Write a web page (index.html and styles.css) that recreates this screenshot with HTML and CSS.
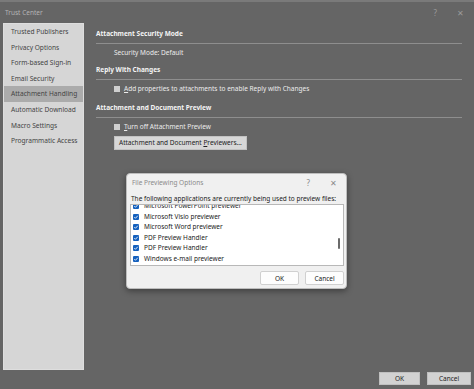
FILE: index.html
```html
<!DOCTYPE html>
<html>
<head>
<meta charset="utf-8">
<link rel="stylesheet" href="styles.css">
</head>
<body>
<div class="window">
  <div class="titlebar">
    <span class="title">Trust Center</span>
    <span class="tb-btns"><span class="q">?</span><span class="x">✕</span></span>
  </div>
  <div class="main">
    <ul class="sidebar">
      <li>Trusted Publishers</li>
      <li>Privacy Options</li>
      <li>Form-based Sign-in</li>
      <li>Email Security</li>
      <li class="active">Attachment Handling</li>
      <li>Automatic Download</li>
      <li>Macro Settings</li>
      <li>Programmatic Access</li>
    </ul>
    <div class="content">
      <div class="head first">Attachment Security Mode</div>
      <div class="row plain">Security Mode: Default</div>
      <div class="head">Reply With Changes</div>
      <div class="row check"><span class="cb"></span><span><u>A</u>dd properties to attachments to enable Reply with Changes</span></div>
      <div class="head">Attachment and Document Preview</div>
      <div class="row check"><span class="cb"></span><span><u>T</u>urn off Attachment Preview</span></div>
      <div class="row"><button class="btn">Attachment and Document <u>P</u>reviewers...</button></div>
    </div>
  </div>
  <div class="footer">
    <button class="fbtn ok">OK</button>
    <button class="fbtn cancel">Cancel</button>
  </div>
</div>

<div class="dialog">
  <div class="d-title">
    <span>File Previewing Options</span>
    <span class="d-tb"><span>?</span><span class="dx">✕</span></span>
  </div>
  <div class="d-label">The following applications are currently being used to preview files:</div>
  <div class="listbox">
    <div class="items">
      <div class="item"><span class="bcb"><svg viewBox="0 0 7 7"><path d="M1.5 3.6 L2.9 5 L5.6 2" fill="none" stroke="#fff" stroke-width="1"/></svg></span>Microsoft PowerPoint previewer</div>
      <div class="item"><span class="bcb"><svg viewBox="0 0 7 7"><path d="M1.5 3.6 L2.9 5 L5.6 2" fill="none" stroke="#fff" stroke-width="1"/></svg></span>Microsoft Visio previewer</div>
      <div class="item"><span class="bcb"><svg viewBox="0 0 7 7"><path d="M1.5 3.6 L2.9 5 L5.6 2" fill="none" stroke="#fff" stroke-width="1"/></svg></span>Microsoft Word previewer</div>
      <div class="item"><span class="bcb"><svg viewBox="0 0 7 7"><path d="M1.5 3.6 L2.9 5 L5.6 2" fill="none" stroke="#fff" stroke-width="1"/></svg></span>PDF Preview Handler</div>
      <div class="item"><span class="bcb"><svg viewBox="0 0 7 7"><path d="M1.5 3.6 L2.9 5 L5.6 2" fill="none" stroke="#fff" stroke-width="1"/></svg></span>PDF Preview Handler</div>
      <div class="item"><span class="bcb"><svg viewBox="0 0 7 7"><path d="M1.5 3.6 L2.9 5 L5.6 2" fill="none" stroke="#fff" stroke-width="1"/></svg></span>Windows e-mail previewer</div>
      <div class="item"><span class="bcb"><svg viewBox="0 0 7 7"><path d="M1.5 3.6 L2.9 5 L5.6 2" fill="none" stroke="#fff" stroke-width="1"/></svg></span>Windows previewer</div>
    </div>
    <div class="scrollbar"><div class="thumb"></div></div>
  </div>
  <div class="d-btns">
    <button class="dbtn">OK</button>
    <button class="dbtn">Cancel</button>
  </div>
</div>
</body>
</html>
```

FILE: styles.css
```css
* { box-sizing: border-box; }
html, body { margin: 0; padding: 0; }
body {
  width: 474px;
  height: 389px;
  overflow: hidden;
  background: #656565;
  font-family: "Noto Sans", "Open Sans", sans-serif;
  font-size: 6.5px;
  color: #f2f2f2;
  position: relative;
}
u { text-decoration: underline; }
.window {
  height: 389px;
  display: flex;
  flex-direction: column;
  border-top: 2px solid #7a7a7a;
}
.titlebar {
  height: 21px;
  display: flex;
  align-items: center;
  justify-content: space-between;
  padding: 0 10px 1px 5px;
  color: #b4b4b4;
}
.tb-btns { display: flex; gap: 20px; color: #9a9a9a; font-size: 8px; }
.main {
  display: flex;
  flex: 1;
}
.sidebar {
  list-style: none;
  margin: 0 0 0 3px;
  padding: 0;
  width: 81px;
  height: 347px;
  background: #d6d6d6;
  border: 1px solid #dedede;
  color: #444;
  font-size: 6.6px;
}
.sidebar li {
  height: 15.6px;
  line-height: 15.6px;
  padding-left: 7px;
  white-space: nowrap;
}
.sidebar li.active { background: #ababab; }
.content {
  flex: 1;
  padding: 5px 12px 0 12px;
}
.head {
  font-weight: bold;
  line-height: 12px;
  padding-bottom: 3px;
  border-bottom: 1px solid #8e8e8e;
  margin-top: 5px;
  color: #f4f4f4;
}
.head.first { margin-top: 0; }
.row {
  line-height: 12px;
  margin-top: 3px;
  padding-left: 18px;
  display: flex;
  align-items: center;
  color: #ececec;
}
.head + .row.check + .head { margin-top: 7px; }
.cb {
  width: 6px;
  height: 6px;
  background: #cfcfcf;
  margin-right: 4px;
  flex: none;
}
.btn {
  font: inherit;
  color: #222;
  background: #d7d7d7;
  border: 1px solid #c2c2c2;
  height: 14px;
  padding: 0 4px;
  line-height: 12px;
}
.footer {
  display: flex;
  justify-content: flex-end;
  gap: 7px;
  padding: 0 3px 4px 0;
}
.fbtn {
  font: inherit;
  color: #222;
  background: #d2d2d2;
  border: 1px solid #c0c0c0;
  height: 13px;
  padding: 0;
}
.fbtn.ok { width: 41px; }
.fbtn.cancel { width: 44px; }

.dialog {
  position: absolute;
  left: 126px;
  top: 173px;
  width: 221px;
  height: 116px;
  background: #f0f0f0;
  border: 1px solid #bdbdbd;
  border-radius: 4px;
  box-shadow: 0 2px 6px rgba(0,0,0,0.4);
  color: #222;
  padding: 0 2px 0 3px;
}
.d-title {
  height: 17px;
  display: flex;
  align-items: center;
  justify-content: space-between;
  padding: 0 7px 0 2px;
  color: #8a8a8a;
}
.d-tb { display: flex; gap: 20px; color: #8a8a8a; font-size: 8px; }
.d-label {
  margin-top: 3px;
  line-height: 10px;
  padding-left: 1px;
  white-space: nowrap;
}
.listbox {
  height: 62px;
  background: #fff;
  border: 1px solid #b8b8b8;
  position: relative;
  overflow: hidden;
  display: flex;
}
.items {
  flex: 1;
  margin-top: -4px;
}
.item {
  height: 10.5px;
  line-height: 10.5px;
  display: flex;
  align-items: center;
  padding-left: 2px;
  white-space: nowrap;
}
.bcb {
  width: 6px;
  height: 6px;
  background: #1560bd;
  border-radius: 1px;
  margin-right: 5px;
  display: flex;
}
.bcb svg { width: 6px; height: 6px; }
.scrollbar {
  width: 8px;
  position: relative;
}
.thumb {
  position: absolute;
  left: 3px;
  top: 33px;
  width: 2px;
  height: 11px;
  background: #6a6a6a;
  border-radius: 1px;
}
.d-btns {
  display: flex;
  justify-content: flex-end;
  gap: 6px;
  margin-top: 5px;
}
.dbtn {
  font: inherit;
  color: #222;
  background: #fdfdfd;
  border: 1px solid #d0d0d0;
  border-radius: 2px;
  width: 39px;
  height: 14px;
  padding: 0;
}
```
